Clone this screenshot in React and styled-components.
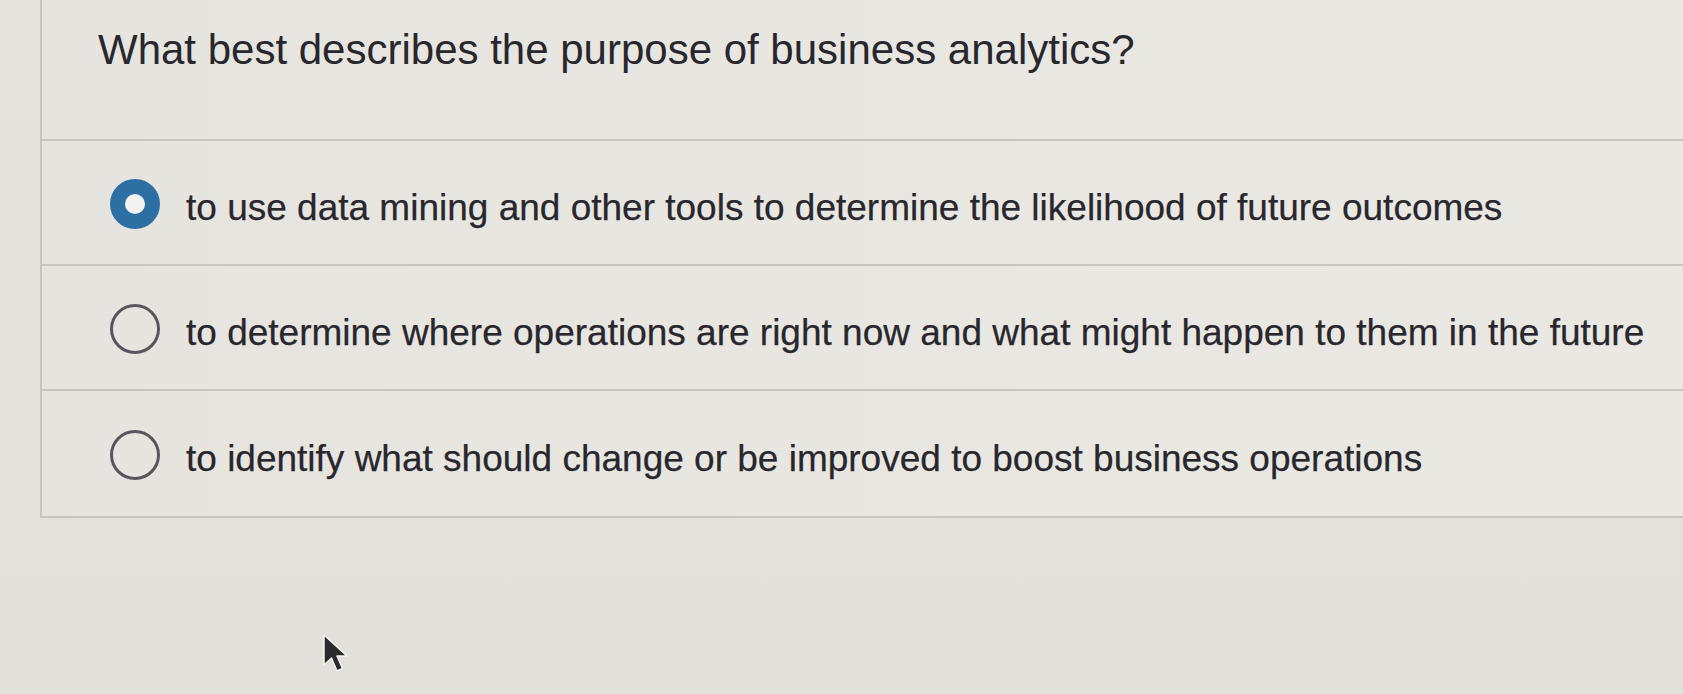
import React from "react";
import styled, { createGlobalStyle } from "styled-components";

const Global = createGlobalStyle`
  html, body { margin: 0; padding: 0; }
  body {
    background: #e3e2dd;
    font-family: "Liberation Sans", Arial, sans-serif;
    overflow: hidden;
  }
`;

const Page = styled.div`
  position: relative;
  width: 1683px;
  height: 694px;
  background: linear-gradient(180deg, #e4e3de 0%, #e1e0db 100%);
  padding-left: 40px;
  box-sizing: border-box;
`;

const Panel = styled.div`
  border-left: 2px solid #c6c5c0;
  border-bottom: 2px solid #c6c5c0;
  background: linear-gradient(90deg, #e5e4df 0%, #e8e7e2 60%, #e9e8e3 100%);
  box-sizing: border-box;
  display: flex;
  flex-direction: column;
`;

const Question = styled.h1`
  margin: 0;
  height: 141px;
  box-sizing: border-box;
  padding: 25px 0 0 56px;
  font-size: 42px;
  line-height: 50px;
  font-weight: 400;
  color: #28272d;
  border-bottom: 2px solid #c6c5c0;
`;

const Options = styled.div`
  display: flex;
  flex-direction: column;
`;

const Option = styled.label`
  display: flex;
  align-items: center;
  gap: 26px;
  height: 125px;
  padding-left: 68px;
  box-sizing: border-box;
  border-bottom: ${(p) => (p.$last ? "none" : "2px solid #c6c5c0")};
  font-size: 37px;
  color: #28272d;
`;

const Radio = styled.span`
  width: 50px;
  height: 50px;
  border-radius: 50%;
  box-sizing: border-box;
  flex: none;
  margin-top: 2px;
  background: ${(p) => (p.$checked ? "#f3f3f1" : "transparent")};
  border: ${(p) => (p.$checked ? "15px solid #2e6fa3" : "3px solid #57565b")};
`;

const Label = styled.span`
  padding-top: 10px;
  -webkit-text-stroke: 0.25px #28272d;
`;

const Cursor = styled.svg`
  position: absolute;
  left: 322px;
  top: 633px;
`;

const options = [
  "to use data mining and other tools to determine the likelihood of future outcomes",
  "to determine where operations are right now and what might happen to them in the future",
  "to identify what should change or be improved to boost business operations",
];

export default function App() {
  return (
    <>
      <Global />
      <Page>
        <Panel>
          <Question>What best describes the purpose of business analytics?</Question>
          <Options>
            {options.map((o, i) => (
              <Option key={i} $last={i === options.length - 1}>
                <Radio $checked={i === 0} />
                <Label>{o}</Label>
              </Option>
            ))}
          </Options>
        </Panel>
        <Cursor width="28" height="42" viewBox="0 0 28 42">
          <path d="M2 2 L2 32 L9.5 25 L15 38 L20.5 35.5 L15 23 L25 23 Z" fill="#2a2a2c" stroke="#f4f4f2" strokeWidth="1.5" strokeLinejoin="round" />
        </Cursor>
      </Page>
    </>
  );
}
